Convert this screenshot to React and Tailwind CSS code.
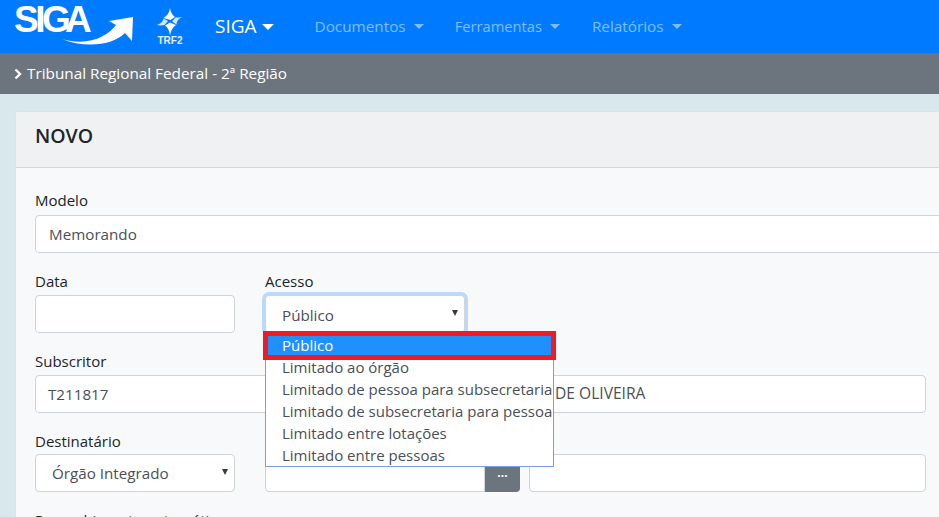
import React from "react";

const font = { fontFamily: "'Open Sans', sans-serif" };

const Logo = () => (
  <div className="relative w-[155px] h-[53px] shrink-0 text-white font-['Liberation_Sans',sans-serif] font-bold text-[37px] leading-[40px]">
    <span className="absolute left-[14px] top-[0px] tracking-[-3.5px]">SIG</span>
    <span className="absolute left-[65px] top-[0px]">A</span>
    <svg className="absolute left-0 top-0" width="140" height="53" viewBox="0 0 140 53">
      <path d="M62 39 C88 47 108 36 116 25 L109 21 L133 17 L132 41 L125 33 C112 46 84 48 62 39 Z" fill="#fff" />
    </svg>
  </div>
);

const TrfLogo = () => (
  <div className="flex flex-col items-center w-[28px] shrink-0">
    <svg width="28" height="29" viewBox="0 0 28 29">
      <path d="M14 1 C14.5 5 16.5 8.5 19 10 L14.5 13 L7.5 11 C11 9 13.5 5.5 14 1 Z" fill="#fff" />
      <path d="M26 10 C23.5 10.5 21 10.5 19.5 10.5 L16 14.5 L20.5 17.5 C20.5 14 23 11.5 26 10 Z" fill="#cfe4ff" />
      <path d="M14 28.5 C13.5 24 12 20.5 9 18.5 L14 15.5 L20 18 C17 20 14.5 24 14 28.5 Z" fill="#fff" />
      <path d="M1 18 C4 17 7 15 7.5 11.5 L12 14 L8.5 18 C6 18.5 3 18.5 1 18 Z" fill="#cfe4ff" />
    </svg>
    <span className="text-[10px] leading-[10px] font-bold text-[#e3efff] font-['Liberation_Sans',sans-serif]">TRF2</span>
  </div>
);

const NavItem = ({ label, className }) => (
  <div className={"flex items-center gap-[8px] text-white/50 " + className}>
    {label}
    <span className="inline-block w-0 h-0 border-x-[5px] border-x-transparent border-t-[5px] border-t-white/50" />
  </div>
);

const Field = ({ label, className, labelClass = "leading-[26px]", children }) => (
  <div className={className}>
    <label className={"block h-[27px] text-[15px] text-[#212529] " + labelClass}>{label}</label>
    {children}
  </div>
);

const inputCls =
  "h-[38px] bg-white border border-[#ced4da] rounded-[4px] px-[12px] flex items-center text-[15.2px] text-[#495057]";

const SelectArrow = () => (
  <span className="absolute right-[6px] top-[14px] w-0 h-0 border-x-[3.5px] border-x-transparent border-t-[6px] border-t-[#343a40]" />
);

const options = [
  "Limitado ao órgão",
  "Limitado de pessoa para subsecretaria",
  "Limitado de subsecretaria para pessoa",
  "Limitado entre lotações",
  "Limitado entre pessoas",
];

export default function App() {
  return (
    <div style={font} className="w-[939px] h-[517px] overflow-hidden bg-[#d9e8ec]">
      <nav className="h-[53px] bg-[#007bff] flex items-center">
        <Logo />
        <div className="ml-[1px]"><TrfLogo /></div>
        <div className="ml-[31px] flex items-center gap-[5px] text-[19px] text-white">
          SIGA
          <span className="inline-block w-0 h-0 border-x-[6px] border-x-transparent border-t-[6px] border-t-white" />
        </div>
        <div className="ml-[41px] flex gap-[31px]">
          <NavItem label="Documentos" className="text-[15.3px]" />
          <NavItem label="Ferramentas" className="text-[14.7px]" />
          <NavItem label="Relatórios" className="text-[15.3px] ml-[1px]" />
        </div>
      </nav>
      <div className="h-[41px] bg-[#6c757d] flex items-center pl-[14px] gap-[5px] text-[15.3px] text-white">
        <svg width="8" height="12" viewBox="0 0 8 12">
          <path d="M1.5 1.5 L6 6 L1.5 10.5" fill="none" stroke="#fff" strokeWidth="2.4" />
        </svg>
        Tribunal Regional Federal - 2ª Região
      </div>
      <div className="pt-[17px] pl-[15px]">
        <div className="w-[960px] bg-[#f8f9fa] border border-[#dfe1e4] rounded-[4px]">
          <div className="h-[56px] pb-[7px] bg-[#f0f1f3] border-b border-[#d5d7da] pl-[19px] flex items-center text-[19.5px] font-semibold text-[#212529]">
            NOVO
          </div>
          <div className="pt-[20px] pl-[19px]">
            <Field label="Modelo" labelClass="leading-[24px]" className="mb-[15px]">
              <div className={inputCls + " w-[950px] pl-[13px]"}>Memorando</div>
            </Field>
            <div className="flex gap-[30px] mb-[15px]">
              <Field label="Data" className="w-[200px]">
                <div className={inputCls} />
              </Field>
              <Field label="Acesso" className="w-[200px] relative">
                <div className={inputCls + " relative pl-[16px] pt-[2px] border-[#80bdff] shadow-[0_0_0_3px_rgba(0,123,255,0.25)]"}>
                  Público
                  <SelectArrow />
                </div>
                <div className="absolute z-10 left-0 top-[65px] w-[289px] bg-white border border-[#7a9fdc] text-[15px] leading-[22px] text-[#495057]">
                  <div className="relative h-[22px] bg-[#2190ff] text-white pl-[16px]">
                    Público
                    <div className="absolute -left-[3px] -right-[3px] -top-[3px] -bottom-[4px] border-[5px] border-[#ed1c24]" />
                  </div>
                  {options.map((o) => (
                    <div key={o} className="pl-[16px] whitespace-nowrap">{o}</div>
                  ))}
                </div>
              </Field>
            </div>
            <div className="flex gap-[9px] mb-[14px]">
              <Field label="Subscritor" className="w-[485px]">
                <div className={inputCls}>T211817</div>
              </Field>
              <div className="w-[397px] pt-[27px]">
                <div className={inputCls + " pl-[25px] text-[15.6px]"}>DE OLIVEIRA</div>
              </div>
            </div>
            <div className="flex">
              <Field label="Destinatário" labelClass="leading-[28px]" className="w-[200px] mr-[30px]">
                <div className={inputCls + " relative pl-[16px]"}>
                  Órgão Integrado
                  <SelectArrow />
                </div>
              </Field>
              <div className="pt-[27px] flex mr-[9px]">
                <div className="w-[220px] h-[38px] bg-white border border-[#ced4da] rounded-l-[4px]" />
                <div className="w-[35px] h-[38px] bg-[#6c757d] rounded-r-[4px] flex items-center justify-center text-white text-[12px] font-bold">
                  ...
                </div>
              </div>
              <div className="pt-[27px] w-[397px]">
                <div className={inputCls} />
              </div>
            </div>
            <div className="mt-[15px] h-[24px] leading-[26px] text-[15px] text-[#212529]">Preenchimento automático</div>
          </div>
        </div>
      </div>
    </div>
  );
}
